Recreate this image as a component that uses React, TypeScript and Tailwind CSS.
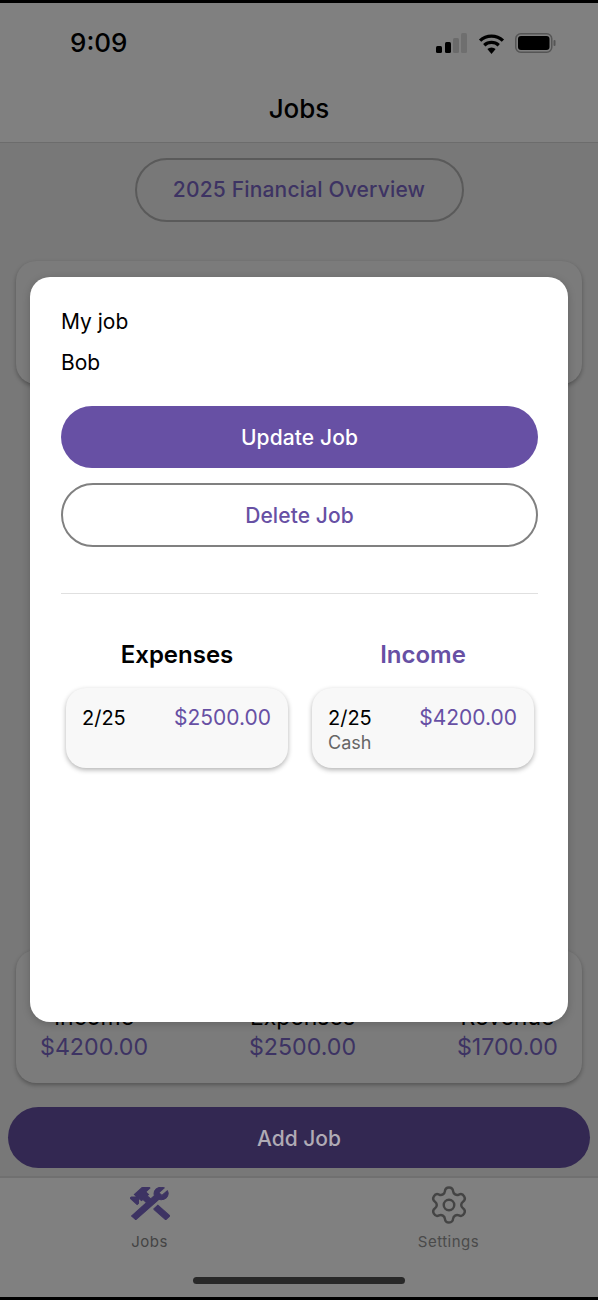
import { Settings } from 'lucide-react';

const inter = "font-['Inter','Liberation_Sans',sans-serif]";

function StatusIcons() {
  return (
    <div className="flex items-center gap-[10px]">
      <svg width="32" height="20" viewBox="0 0 32 20">
        <rect x="0" y="13" width="6" height="7" rx="1.5" fill="#000" />
        <rect x="9" y="9" width="6" height="11" rx="1.5" fill="#000" />
        <rect x="17" y="5" width="6" height="15" rx="1.5" fill="#6b6b6b" />
        <rect x="25" y="0" width="6" height="20" rx="1.5" fill="#6f6f6f" />
      </svg>
      <svg width="27" height="21" viewBox="0 0 26 20">
        <path d="M13 20l-4-4.6a6 6 0 0 1 8 0z" fill="#000" />
        <path d="M2 7.2a16 16 0 0 1 22 0M6 11.6a10.5 10.5 0 0 1 14 0" fill="none" stroke="#000" strokeWidth="3.2" />
      </svg>
      <svg width="42" height="20" viewBox="0 0 42 20">
        <rect x="0.75" y="0.75" width="36" height="18.5" rx="5" fill="none" stroke="#555" strokeWidth="1.5" />
        <rect x="3" y="3" width="31.5" height="14" rx="3" fill="#000" />
        <rect x="38.5" y="7" width="2" height="6" rx="1" fill="#555" />
      </svg>
    </div>
  );
}

function Stat({ label, value }: { label: string; value: string }) {
  return (
    <div className="flex flex-col items-center">
      <span className="text-[23px] leading-[28px] text-black">{label}</span>
      <span className="text-[23.2px] leading-[32px] text-[#3d3363]">{value}</span>
    </div>
  );
}

function EntryCard({ date, amount, note }: { date: string; amount: string; note?: string }) {
  return (
    <div className="h-[80px] w-[222px] rounded-[20px] bg-[#f8f8f8] pl-4 pr-[17px] pt-[16px] shadow-[0_2px_5px_rgba(0,0,0,0.3)]">
      <div className="flex items-center justify-between">
        <span className="text-[20px] leading-[28px] text-black">{date}</span>
        <span className="text-[21px] leading-[28px] text-[#6750a4]">{amount}</span>
      </div>
      {note && <div className="text-[18px] leading-[22px] text-[#666]">{note}</div>}
    </div>
  );
}

export default function App() {
  return (
    <div className={`${inter} relative flex h-[1300px] w-[598px] flex-col overflow-hidden border-y-[3px] border-black bg-[#787878]`}>
      {/* Header */}
      <div className="h-[140px] border-b border-[#6c6c6c] bg-[#808080]">
        <div className="flex items-center justify-between pl-[70px] pr-[41px] pt-[23px]">
          <span className="text-[26px] font-medium leading-[34px] text-black">9:09</span>
          <StatusIcons />
        </div>
        <div className="pt-[33px] text-center text-[26px] font-medium leading-[32px] text-black">Jobs</div>
      </div>

      {/* Page behind the modal */}
      <div className="flex flex-1 flex-col">
        <div className="flex justify-center pt-[15px]">
          <div className="flex h-[64px] w-[329px] items-center justify-center rounded-full border-2 border-[#5a5a5a] text-[21px] font-medium tracking-[0.17px] text-[#3d3363]">
            2025 Financial Overview
          </div>
        </div>
        <div className="mx-4 mt-[39px] h-[123px] rounded-[20px] bg-[#7b7b7b] shadow-[0_2px_4px_rgba(0,0,0,0.3)]" />
        <div className="flex-1" />
        <div className="mx-4 flex h-[133px] items-end justify-between rounded-[20px] bg-[#7b7b7b] pb-[20px] pl-[24px] pr-[24px] shadow-[0_2px_4px_rgba(0,0,0,0.3)]">
          <Stat label="Income" value="$4200.00" />
          <Stat label="Expenses" value="$2500.00" />
          <Stat label="Revenue" value="$1700.00" />
        </div>
        <div className="mx-2 mb-2 mt-[24px] flex h-[61px] items-center justify-center rounded-full bg-[#332852] pt-[2px] text-[21px] font-medium text-[#b0abb5]">
          Add Job
        </div>
      </div>

      {/* Tab bar */}
      <div className="relative h-[121px] border-t-2 border-[#707070] bg-[#808080]">
        <div className="flex">
          <div className="flex w-[299px] flex-col items-center pt-[9px]">
            <svg width="40" height="33" viewBox="2.1 3 19.8 18.4" preserveAspectRatio="none" fill="#3d3363" stroke="#3d3363" strokeWidth="0.5">
              <path d="M13.78 15.3L19.78 21.3L21.89 19.14L15.89 13.14L13.78 15.3M17.5 10.1C17.11 10.1 16.69 10.05 16.36 9.91L4.97 21.25L2.86 19.14L10.27 11.74L8.5 9.96L7.78 10.66L6.33 9.25V12.11L5.63 12.81L2.11 9.25L2.81 8.55H5.62L4.22 7.14L7.78 3.58C8.95 2.41 10.83 2.41 12 3.58L9.89 5.74L11.3 7.14L10.59 7.85L12.38 9.63L14.2 7.75C14.06 7.42 14 7 14 6.63C14 4.66 15.56 3.11 17.5 3.11C18.09 3.11 18.61 3.25 19.08 3.53L16.41 6.2L17.91 7.7L20.58 5.03C20.86 5.5 21 6 21 6.63C21 8.59 19.44 10.1 17.5 10.1Z" />
            </svg>
            <span className="mt-[12px] text-[15px] leading-[20px] tracking-[0.5px] text-[#444]">Jobs</span>
          </div>
          <div className="flex w-[299px] flex-col items-center pt-[6px]">
            <Settings size={42} strokeWidth={1.4} color="#444" />
            <span className="mt-[6px] text-[15px] leading-[20px] tracking-[0.5px] text-[#4a4a4a]">Settings</span>
          </div>
        </div>
        <div className="absolute bottom-[13px] left-[193px] h-[7px] w-[212px] rounded-full bg-[#282828]" />
      </div>

      {/* Modal */}
      <div className="absolute left-[30px] top-[274px] h-[745px] w-[538px] rounded-[20px] bg-white pl-[31px] pr-[30px] pt-[31px] shadow-[0_2px_8px_rgba(0,0,0,0.2)]">
        <div className="text-[21px] leading-[28px] text-black">My job</div>
        <div className="mt-[13px] text-[21px] leading-[28px] text-black">Bob</div>
        <div className="mt-[29px] flex h-[62px] items-center justify-center rounded-full bg-[#6750a4] pt-[1px] text-[21px] font-medium tracking-[0.1px] text-white">
          Update Job
        </div>
        <div className="mt-[15px] flex h-[64px] items-center justify-center rounded-full border-2 border-[#808080] pt-[1px] text-[21px] font-medium tracking-[0.1px] text-[#6750a4]">
          Delete Job
        </div>
        <div className="mt-[46px] border-t border-[#e0e0e0]" />
        <div className="mt-[43px] flex justify-between pl-[5px] pr-[4px]">
          <div className="flex flex-col items-center gap-[15px]">
            <span className="text-[24px] font-semibold leading-[36px] text-black">Expenses</span>
            <EntryCard date="2/25" amount="$2500.00" />
          </div>
          <div className="flex flex-col items-center gap-[15px]">
            <span className="text-[24px] font-semibold leading-[36px] text-[#6750a4]">Income</span>
            <EntryCard date="2/25" amount="$4200.00" note="Cash" />
          </div>
        </div>
      </div>
    </div>
  );
}
